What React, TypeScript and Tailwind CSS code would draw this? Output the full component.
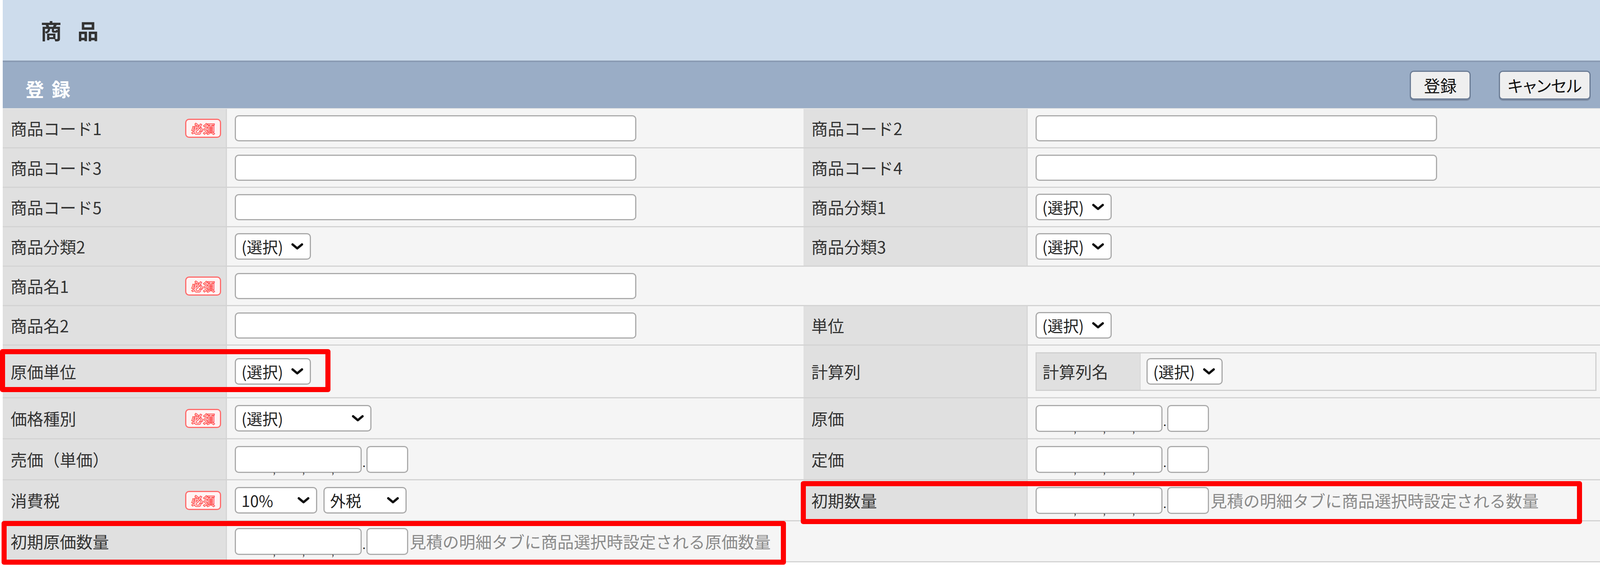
import type { ReactNode } from "react";

const font = "font-['Noto_Sans_CJK_JP','Noto_Sans',sans-serif]";

function Required() {
  return (
    <span className="flex h-[49px] w-[92px] items-center justify-center rounded-[10px] border-[3px] border-[#ff6b6b] bg-[#fff3f3] text-[30px] font-bold leading-none text-[#fff6f6] [-webkit-text-stroke:2px_#ff5c5c]">
      必須
    </span>
  );
}

function Label({ children, req }: { children: ReactNode; req?: boolean }) {
  return (
    <div className="flex items-center justify-between border-r-[3px] border-[#d6d6d6] bg-[#e0e0e0] pl-[20px] pr-[12px]">
      <span className="text-[42px] leading-none text-[#333]">{children}</span>
      {req && <Required />}
    </div>
  );
}

function Cell({ children, span }: { children?: ReactNode; span?: boolean }) {
  return (
    <div className={span ? "col-span-3 flex items-center bg-[#f5f5f5] pl-[20px]" : "flex items-center bg-[#f5f5f5] pl-[20px]"}>
      {children}
    </div>
  );
}

function TextBox() {
  return (
    <input
      type="text"
      className="h-[67px] w-[1028px] rounded-[10px] border-[3px] border-[#ababab] bg-white px-[12px] text-[40px] outline-none"
    />
  );
}

function Chevron() {
  return (
    <svg width="32" height="18" viewBox="0 0 32 18" className="shrink-0">
      <polyline points="4,4 16,14 28,4" fill="none" stroke="#111" strokeWidth="6" strokeLinecap="round" strokeLinejoin="round" />
    </svg>
  );
}

function Select({ text = "(選択)", w = "w-[195px]" }: { text?: string; w?: string }) {
  return (
    <div className={`flex h-[68px] items-center justify-between rounded-[10px] border-[3px] border-[#a9a9a9] bg-white pl-[14px] pr-[16px] ${w}`}>
      <span className="text-[40px] leading-none text-[#222]">{text}</span>
      <Chevron />
    </div>
  );
}

function NumberBox({ hint }: { hint?: string }) {
  return (
    <div className="flex items-center">
      <div className="relative h-[69px] w-[325px] rounded-[10px] border-[3px] border-[#ababab] bg-white">
        <span className="absolute bottom-[-6px] left-[95px] text-[22px] leading-none text-[#333]">,</span>
        <span className="absolute bottom-[-6px] left-[170px] text-[22px] leading-none text-[#333]">,</span>
        <span className="absolute bottom-[-6px] left-[245px] text-[22px] leading-none text-[#333]">,</span>
      </div>
      <span className="mt-[16px] w-[12px] text-center text-[28px] leading-none text-[#111]">.</span>
      <div className="h-[69px] w-[107px] rounded-[10px] border-[3px] border-[#ababab] bg-white" />
      {hint && <span className="ml-[4px] text-[42px] leading-none text-[#8a8a8a]">{hint}</span>}
    </div>
  );
}

function Row({ h, children }: { h: string; children: ReactNode }) {
  return <div className={`grid grid-cols-[574px_1476px_574px_1fr] border-b-[3px] border-[#d3d3d3] ${h}`}>{children}</div>;
}

export default function App() {
  return (
    <div className={`relative min-h-screen bg-white pl-[7px] ${font}`}>
      <div className="flex h-[159px] items-center border-b-[4px] border-[#8a9bb3] bg-[#cddcec] pl-[97px]">
        <h1 className="text-[54px] font-bold leading-none tracking-[14px] text-[#333]">商 品</h1>
      </div>

      <div className="flex h-[118px] items-center justify-between bg-[#9aadc6] pl-[58px] pr-[24px]">
        <h2 className="pt-[16px] text-[48px] font-bold leading-none tracking-[4px] text-white">登 録</h2>
        <div className="flex items-center gap-[72px]">
          <button className="flex h-[74px] w-[156px] items-center justify-center rounded-[10px] border-[3px] border-[#6b7c95] bg-[#efefef] text-[42px] leading-none text-[#111] shadow-[0_3px_0_#7d8ca3]">
            登録
          </button>
          <button className="flex h-[74px] w-[235px] items-center justify-center rounded-[10px] border-[3px] border-[#6b7c95] bg-[#efefef] text-[42px] leading-none text-[#111] shadow-[0_3px_0_#7d8ca3] [font-feature-settings:'palt']">
            キャンセル
          </button>
        </div>
      </div>

      <div className="border-t-[2px] border-[#e6e6e6]">
        <Row h="h-[101px]">
          <Label req>商品コード1</Label>
          <Cell><TextBox /></Cell>
          <Label>商品コード2</Label>
          <Cell><TextBox /></Cell>
        </Row>
        <Row h="h-[101px]">
          <Label>商品コード3</Label>
          <Cell><TextBox /></Cell>
          <Label>商品コード4</Label>
          <Cell><TextBox /></Cell>
        </Row>
        <Row h="h-[101px]">
          <Label>商品コード5</Label>
          <Cell><TextBox /></Cell>
          <Label>商品分類1</Label>
          <Cell><Select /></Cell>
        </Row>
        <Row h="h-[101px]">
          <Label>商品分類2</Label>
          <Cell><Select /></Cell>
          <Label>商品分類3</Label>
          <Cell><Select /></Cell>
        </Row>
        <Row h="h-[101px]">
          <Label req>商品名1</Label>
          <Cell span><TextBox /></Cell>
        </Row>
        <Row h="h-[101px]">
          <Label>商品名2</Label>
          <Cell><TextBox /></Cell>
          <Label>単位</Label>
          <Cell><Select /></Cell>
        </Row>
        <Row h="h-[135px]">
          <Label>原価単位</Label>
          <Cell><Select /></Cell>
          <Label>計算列</Label>
          <div className="flex items-center bg-[#f5f5f5] pl-[20px] pr-[9px]">
            <div className="flex h-[99px] w-full border-[3px] border-[#d0d0d0]">
              <div className="flex w-[266px] items-center border-r-[2px] border-[#d6d6d6] bg-[#e0e0e0] pl-[15px]">
                <span className="text-[42px] leading-none text-[#333]">計算列名</span>
              </div>
              <div className="flex items-center pl-[15px]">
                <Select />
              </div>
            </div>
          </div>
        </Row>
        <Row h="h-[105px]">
          <Label req>価格種別</Label>
          <Cell><Select w="w-[350px]" /></Cell>
          <Label>原価</Label>
          <Cell><NumberBox /></Cell>
        </Row>
        <Row h="h-[105px]">
          <Label>売価（単価）</Label>
          <Cell><NumberBox /></Cell>
          <Label>定価</Label>
          <Cell><NumberBox /></Cell>
        </Row>
        <Row h="h-[105px]">
          <Label req>消費税</Label>
          <Cell>
            <div className="flex items-center gap-[16px]">
              <Select text="10%" w="w-[211px]" />
              <Select text="外税" w="w-[213px]" />
            </div>
          </Cell>
          <Label>初期数量</Label>
          <Cell><NumberBox hint="見積の明細タブに商品選択時設定される数量" /></Cell>
        </Row>
        <Row h="h-[105px]">
          <Label>初期原価数量</Label>
          <Cell span><NumberBox hint="見積の明細タブに商品選択時設定される原価数量" /></Cell>
        </Row>
      </div>

      {/* annotation frames */}
      <div className="pointer-events-none absolute left-0 top-[894px] h-[110px] w-[846px] rounded-[6px] border-[13px] border-[#ff0000]" />
      <div className="pointer-events-none absolute left-[2050px] top-[1232px] h-[110px] w-[2000px] rounded-[6px] border-[13px] border-[#ff0000]" />
      <div className="pointer-events-none absolute left-[4px] top-[1334px] h-[112px] w-[2008px] rounded-[6px] border-[13px] border-[#ff0000]" />
    </div>
  );
}
